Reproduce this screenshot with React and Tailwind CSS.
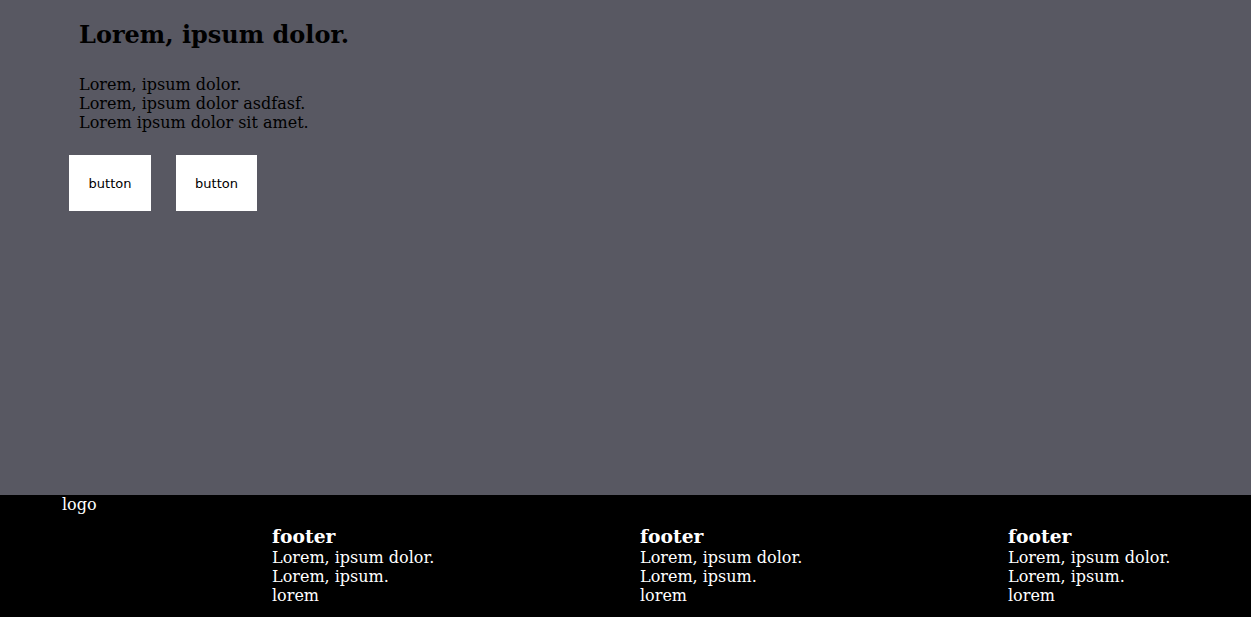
import React from "react";

const columns = [1, 2, 3];

const App = () => {
  return (
    <div className="min-h-[617px] flex flex-col font-['DejaVu_Serif',serif]">
      <main className="flex-1 bg-[#585862] px-[79px] pt-[21px]">
        <h2 className="text-[24px] font-bold leading-[28px] text-black">Lorem, ipsum dolor.</h2>
        <p className="mt-[26px] text-[16px] leading-[19px] text-black">
          Lorem, ipsum dolor.
          <br />
          Lorem, ipsum dolor asdfasf.
          <br />
          Lorem ipsum dolor sit amet.
        </p>
        <div className="mt-[23px] -ml-[10px] flex gap-[25px]">
          <button className="w-[82px] h-[56px] pt-[2px] bg-white text-black text-[13px] font-['DejaVu_Sans',sans-serif]">button</button>
          <button className="w-[81px] h-[56px] pt-[2px] bg-white text-black text-[13px] font-['DejaVu_Sans',sans-serif]">button</button>
        </div>
      </main>
      <footer className="h-[122px] bg-black text-white">
        <div className="pl-[62px] text-[16px] leading-[19px]">logo</div>
        <div className="mt-[11px] ml-[272px] grid grid-cols-[368px_368px_1fr]">
          {columns.map(c => (
            <div key={c}>
              <h3 className="text-[18.72px] font-bold leading-[23px]">footer</h3>
              <p className="text-[16px] leading-[19px]">
                Lorem, ipsum dolor.
                <br />
                Lorem, ipsum.
                <br />
                lorem
              </p>
            </div>
          ))}
        </div>
      </footer>
    </div>
  );
};

export default App;
